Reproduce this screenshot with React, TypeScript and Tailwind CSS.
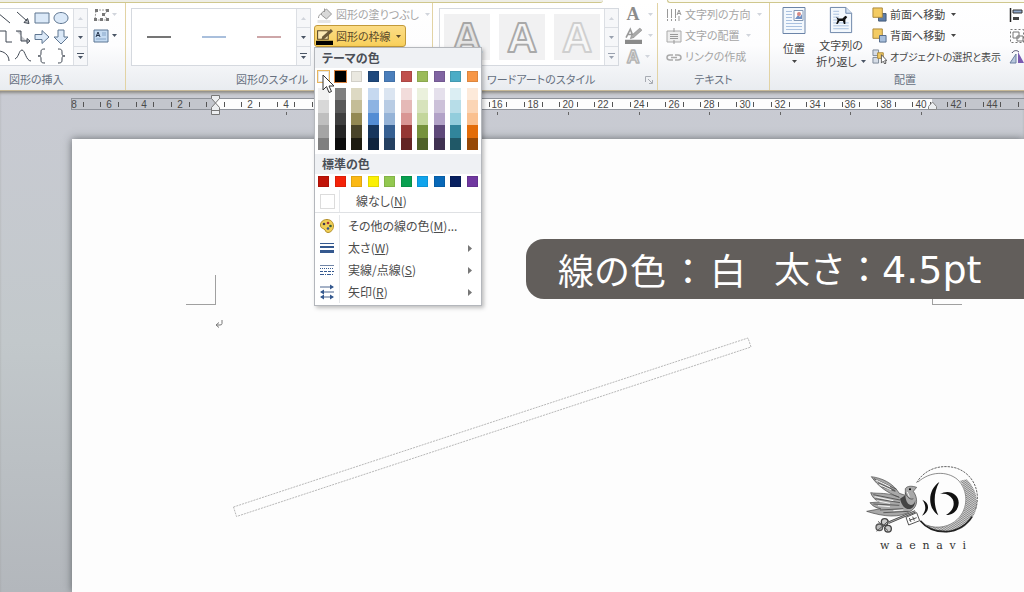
import React from 'react';

const themeColors = [
  { name: '白', base: '#ffffff', shades: ['#f2f2f2', '#d8d8d8', '#bfbfbf', '#a5a5a5', '#7f7f7f'] },
  { name: '黒', base: '#000000', shades: ['#7f7f7f', '#595959', '#3f3f3f', '#262626', '#0c0c0c'] },
  { name: 'ベージュ', base: '#eae8e0', shades: ['#ddd9c3', '#c4bd97', '#938953', '#494429', '#1d1b10'] },
  { name: '濃い青', base: '#1f497d', shades: ['#c6d9f0', '#8db3e2', '#548dd4', '#17365d', '#0f243e'] },
  { name: '青', base: '#4a7ebb', shades: ['#dbe5f1', '#b8cce4', '#95b3d7', '#366092', '#244061'] },
  { name: '赤', base: '#c0504d', shades: ['#f2dcdb', '#e5b9b7', '#d99694', '#953734', '#632423'] },
  { name: 'オリーブ', base: '#9bbb59', shades: ['#ebf1dd', '#d7e3bc', '#c3d69b', '#76923c', '#4f6128'] },
  { name: '紫', base: '#8064a2', shades: ['#e5e0ec', '#ccc1d9', '#b2a2c7', '#5f497a', '#3f3151'] },
  { name: 'アクア', base: '#4bacc6', shades: ['#dbeef3', '#b7dde8', '#92cddc', '#31859b', '#205867'] },
  { name: 'オレンジ', base: '#f79646', shades: ['#fdeada', '#fbd5b5', '#fac08f', '#e36c09', '#974806'] },
];

const standardColors = ['#c01408', '#f42208', '#fbb814', '#fbf004', '#92c850', '#08a050', '#10a4ec', '#0868b8', '#082060', '#7038a0'];

const Caret: React.FC<{ className?: string }> = ({ className = 'text-gray-600' }) => (
  <svg className={`w-[5px] h-[3px] shrink-0 ${className}`} viewBox="0 0 5 3" aria-hidden="true">
    <path d="M0 0h5L2.5 3z" fill="currentColor" />
  </svg>
);

const Icon: React.FC<{ children: React.ReactNode; className?: string }> = ({ children, className = 'w-4 h-4' }) => (
  <svg className={`shrink-0 ${className}`} viewBox="0 0 16 16" fill="none" aria-hidden="true">
    {children}
  </svg>
);

interface GroupProps {
  label: string;
  className: string;
  labelClassName?: string;
  launcher?: boolean;
  children: React.ReactNode;
}

const Group: React.FC<GroupProps> = ({ label, className, labelClassName = 'justify-center', launcher, children }) => (
  <section className={`flex flex-col border-[#e2d3a4] text-[11px] ${className}`}>
    <div className="flex h-[66px] pt-px whitespace-nowrap">{children}</div>
    <div className={`relative flex h-[21px] items-center text-[#66707f] ${labelClassName}`}>
      <h2>{label}</h2>
      {launcher && (
        <svg className="absolute right-1 top-[7px] w-2 h-2" viewBox="0 0 8 8" fill="none" stroke="#a7abb2" aria-hidden="true">
          <path d="M.5 6V.5H6M3 3l4 4M7.500 4v3.500H4" />
        </svg>
      )}
    </div>
  </section>
);

const GalleryScroll: React.FC<{ muted?: boolean }> = ({ muted }) => {
  const tone = muted ? 'text-gray-400' : 'text-gray-600';
  return (
    <div className="flex w-[14px] shrink-0 flex-col divide-y divide-[#dcdfe4] border-l border-[#dcdfe4] bg-[#f6f7f9]">
      <button aria-label="上へ" className="flex flex-1 items-center justify-center">
        <Caret className="rotate-180 text-gray-300" />
      </button>
      <button aria-label="下へ" className="flex flex-1 items-center justify-center">
        <Caret className={tone} />
      </button>
      <button aria-label="その他" className="flex flex-1 flex-col items-center justify-center gap-[2px]">
        <span className={`h-px w-[7px] bg-current ${tone}`} />
        <Caret className={tone} />
      </button>
    </div>
  );
};

const shapes = [
  { name: '直線', path: 'M-1 3L11 13' },
  { name: '矢印', path: 'M2 2l10 9M14 13.500l-1.500-5-3.500 4z', arrow: true },
  { name: '四角形', path: 'M1 3h14v10H1z', fill: true },
  { name: '楕円', path: 'M8 2.500c4 0 7 2.500 7 5.500s-3 5.500-7 5.500S1 11 1 8s3-5.500 7-5.500z', fill: true },
  { name: 'カギ線', path: 'M0 2h7v11h6' },
  { name: 'カギ線矢印', path: 'M1 2h5v10h6M12 9.500l3 2.500-3 2.500z', arrow: true },
  { name: '右矢印', path: 'M1 5.500h7V1.500l7 6.500-7 6.500v-4H1z', fill: true },
  { name: '下矢印', path: 'M5 1v7H1l7 7 7-7h-4V1z', fill: true },
  { name: '円弧', path: 'M-1 3c6 0 11 4 11 10' },
  { name: '曲線', path: 'M0 11C4 9 4 2 7 2s4 11 9 11' },
  { name: '左中かっこ', path: 'M11 1C7 1 7 2 7 5s-1 3-3 3c2 0 3 0 3 3s0 4 4 4' },
  { name: '右中かっこ', path: 'M5 1c4 0 4 1 4 4s1 3 3 3c-2 0-3 0-3 3s0 4-4 4' },
];

const InsertShapes: React.FC = () => (
  <Group label="図形の挿入" className="w-[126px] shrink-0 border-r" labelClassName="pl-[9px]">
    <div className="mt-1 flex h-[58px] w-[88px] shrink-0 border border-l-0 border-[#d5d9df] bg-white">
      <div className="grid flex-1 grid-cols-[13px_19px_19px_19px] items-center justify-items-center">
        {shapes.map(shape => (
          <button key={shape.name} aria-label={shape.name}>
            <Icon>
              <path
                d={shape.path}
                stroke={shape.fill ? '#5f7691' : '#3f4752'}
                fill={shape.fill ? '#dbe9f8' : shape.arrow ? '#3f4752' : 'none'}
                fillOpacity={shape.arrow ? 0.3 : 1}
              />
            </Icon>
          </button>
        ))}
      </div>
      <GalleryScroll />
    </div>
    <div className="flex flex-col pl-[5px]">
      <button aria-label="図形の編集" className="flex h-[21px] items-center gap-[1px]">
        <Icon className="w-[18px] h-[16px]">
          <path d="M2 3h12L10 8l4 5H1z" stroke="#9a9a9a" strokeDasharray="2 1" />
          <path d="M1 2h3v3H1zM12 2h3v3h-3zM8 6h3v3H8zM0 11h3v3H0zM6 11h3v3H6zM12 11h3v3h-3z" fill="#777" />
        </Icon>
        <Caret className="text-gray-300" />
      </button>
      <button aria-label="テキスト ボックス" className="flex h-[21px] items-center gap-[3px]">
        <Icon className="w-[16px] h-[16px]">
          <path d="M1 2h14v12H1z" fill="#c5dbf2" stroke="#5d7694" />
          <path d="M3 9l2-5 2 5M4 7.500h2" stroke="#26354d" />
          <path d="M9 5h4M9 7h4M3 11h10" stroke="#86a5c8" />
        </Icon>
        <Caret />
      </button>
    </div>
  </Group>
);

const Swatch: React.FC<{ color: string; name: string; className?: string }> = ({ color, name, className = '' }) => (
  <button aria-label={name} className={`h-[11px] w-[11px] border border-black/10 ${className}`} style={{ backgroundColor: color }} />
);

const MenuHeading: React.FC<{ children: React.ReactNode }> = ({ children }) => (
  <h3 className="flex h-5 items-center bg-[#eff1f4] pl-[7px] text-[12px] font-bold text-[#4b4f57]">{children}</h3>
);

interface MenuItemProps {
  icon: React.ReactNode;
  label: string;
  accessKey: string;
  suffix?: string;
  submenu?: boolean;
}

const MenuItem: React.FC<MenuItemProps> = ({ icon, label, accessKey, suffix = '', submenu }) => (
  <button className="flex h-[22px] w-full items-center">
    <span className="flex w-6 justify-center">{icon}</span>
    <span className="flex h-full flex-1 items-center border-l border-[#e6e8eb] pl-[8px] text-left">
      <span>
        {label}(<u>{accessKey}</u>){suffix}
      </span>
    </span>
    {submenu && (
      <svg className="mr-[9px] h-[7px] w-1" viewBox="0 0 4 7" aria-hidden="true">
        <path d="M0 0l4 3.500L0 7z" fill="#777" />
      </svg>
    )}
  </button>
);

const OutlineMenu: React.FC = () => (
  <div className="absolute left-0 top-full z-20 w-[168px] border border-[#b4b7bc] bg-white pb-px text-[12px] text-[#4c4c4c] shadow-[2px_2px_4px_rgba(0,0,0,0.25)]">
    <MenuHeading>テーマの色</MenuHeading>
    <div className="flex justify-between px-[3px] pt-[3px]">
      {themeColors.map((color, i) => (
        <Swatch
          key={color.name}
          name={color.name}
          color={color.base}
          className={i === 0 ? 'outline outline-[#e9b65c]' : i === 1 ? 'outline outline-[#d98442]' : ''}
        />
      ))}
    </div>
    <div className="flex justify-between px-[3px] pb-[4px] pt-[6px]">
      {themeColors.map(color => (
        <div key={color.name} className="flex h-[62px] w-[11px] flex-col">
          {color.shades.map(shade => (
            <button key={shade} aria-label={shade} className="flex-1" style={{ backgroundColor: shade }} />
          ))}
        </div>
      ))}
    </div>
    <MenuHeading>標準の色</MenuHeading>
    <div className="flex justify-between px-[3px] pb-[3px] pt-[2px]">
      {standardColors.map(color => (
        <Swatch key={color} name={color} color={color} />
      ))}
    </div>
    <button className="flex h-[23px] w-full items-center border-b border-[#dfe1e4]">
      <span className="flex w-6 justify-center">
        <span className="h-[15px] w-[15px] border border-[#dcdcdc] bg-white" />
      </span>
      <span className="flex h-full items-center border-l border-[#e6e8eb] pl-4">
        <span>線なし(<u>N</u>)</span>
      </span>
    </button>
    <div className="pb-px pt-[2px]">
      <MenuItem
        label="その他の線の色"
        accessKey="M"
        suffix="..."
        icon={
          <Icon>
            <path d="M8 1.500c4 0 6.500 3 6.500 6.500S12 14.500 9 14.500 7 12 5 11 1.500 10 1.500 7 4 1.500 8 1.500z" fill="#f0cf55" stroke="#b38f2b" />
            <circle cx="5" cy="6" r="1.300" fill="#3b3a52" />
            <circle cx="9" cy="5" r="1.300" fill="#a33" />
            <circle cx="11.500" cy="8" r="1.300" fill="#375c39" />
            <circle cx="9" cy="10.500" r="1.300" fill="#37548a" />
          </Icon>
        }
      />
      <MenuItem
        label="太さ"
        accessKey="W"
        submenu
        icon={
          <Icon>
            <path d="M1 3.500h14" stroke="#35598f" />
            <path d="M1 7h14" stroke="#35598f" strokeWidth="2" />
            <path d="M1 11.500h14" stroke="#35598f" strokeWidth="3" />
          </Icon>
        }
      />
      <MenuItem
        label="実線/点線"
        accessKey="S"
        submenu
        icon={
          <Icon>
            <path d="M1 3.500h14" stroke="#7186a8" />
            <path d="M1 6.500h14" stroke="#35598f" strokeDasharray="1 1" />
            <path d="M1 9.500h14" stroke="#35598f" strokeDasharray="3 1" />
            <path d="M1 12.500h14" stroke="#35598f" strokeDasharray="4 1 1 1" />
          </Icon>
        }
      />
      <MenuItem
        label="矢印"
        accessKey="R"
        submenu
        icon={
          <Icon>
            <path d="M1 3h13M2 8h13M2 13h12" stroke="#4a648e" />
            <path d="M11 .5L15 3l-4 2.500zM5 5.500L1 8l4 2.500zM5 10.500L1 13l4 2.500zM11 10.500l4 2.500-4 2.500z" fill="#35598f" />
          </Icon>
        }
      />
    </div>
  </div>
);

const ShapeStyles: React.FC = () => (
  <Group label="図形のスタイル" className="w-[307px] shrink-0 border-r" labelClassName="pl-[110px]">
    <div className="ml-[5px] mt-1 flex h-[58px] w-[180px] shrink-0 border border-[#d5d9df] bg-white">
      <div className="flex flex-1 items-center justify-around">
        <button aria-label="黒" className="h-[2px] w-6 bg-[#757575]" />
        <button aria-label="青" className="h-[2px] w-6 bg-[#a9bfdc]" />
        <button aria-label="赤" className="h-[2px] w-6 bg-[#cda6a8]" />
      </div>
      <GalleryScroll />
    </div>
    <div className="ml-[3px] flex flex-col items-start">
      <button className="flex h-[21px] items-center gap-[3px] pl-[2px] text-[#a5a5a5]">
        <Icon className="w-[17px] h-[16px]">
          <path d="M5 6l5-4 5 5-5 5-5-4z" fill="#d8d8d8" stroke="#999" />
          <path d="M8 5V1.500M5 7c-2 0-3 2-3 4" stroke="#999" />
          <path d="M1 13h13v3H1z" fill="#e5e5e5" />
        </Icon>
        図形の塗りつぶし
        <Caret className="ml-[3px] text-gray-300" />
      </button>
      <div className="relative">
        <button className="flex h-[22px] items-center gap-[3px] rounded-[3px] border border-[#c29a3a] bg-linear-to-b from-[#fbdc86] to-[#f9d05a] pl-px pr-1 text-[#5b4a2a]">
          <Icon className="w-[17px] h-[17px]">
            <path d="M1.500 2.500h10v8h-10z" stroke="#5b4a2a" fill="#fbe9b5" />
            <path d="M14 1l2 2-8 7-3 1 1-3z" fill="#6b5a3a" />
            <path d="M0 12h16v4H0z" fill="#000" />
          </Icon>
          図形の枠線
          <Caret className="ml-[2px] text-[#5b4a2a]" />
        </button>
        <OutlineMenu />
        {/* mouse pointer over the first theme colour */}
        <svg className="absolute left-[8px] top-[49px] z-30 h-[20px] w-[13px]" viewBox="0 0 13 20" aria-hidden="true">
          <path d="M1 1v15l3.500-3.500L7 18.500l2.500-1L7 12h5z" fill="#fff" stroke="#333" />
        </svg>
      </div>
    </div>
  </Group>
);

const wordArt = [
  { name: 'スタイル 1', stroke: '#a6a6a6', fill: '#e4e4e4' },
  { name: 'スタイル 2', stroke: '#a9a9a9', fill: '#f4f4f4' },
  { name: 'スタイル 3', stroke: '#cfcfcf', fill: '#f7f7f7' },
];

// outlined capital drawn on the gallery tiles
const OutlinedA: React.FC<{ stroke: string; fill: string; size: string; width: number }> = ({ stroke, fill, size, width }) => (
  <svg className={`overflow-visible font-['Liberation_Sans'] text-[44px] font-bold ${size}`} viewBox="0 0 40 40" aria-hidden="true">
    <text x="20" y="36" textAnchor="middle" fill={fill} stroke={stroke} strokeWidth={width} strokeLinejoin="round">
      A
    </text>
  </svg>
);

const WordArtStyles: React.FC = () => (
  <Group label="ワードアートのスタイル" className="w-[225px] shrink-0 border-r" labelClassName="pl-[54px]" launcher>
    <div className="ml-[6px] mt-1 flex h-[58px] w-[180px] shrink-0 border border-[#d5d9df] bg-white">
      <div className="flex flex-1 items-center justify-around">
        {wordArt.map(style => (
          <button key={style.name} aria-label={style.name} className="flex h-[46px] w-[46px] items-center justify-center bg-[#f1f1f2]">
            <OutlinedA stroke={style.stroke} fill={style.fill} size="h-[38px] w-[38px]" width={2} />
          </button>
        ))}
      </div>
      <GalleryScroll muted />
    </div>
    <div className="ml-[6px] flex flex-col items-start">
      <button className="flex h-[21px] items-center gap-[7px] font-['Liberation_Serif'] text-[18px] font-bold text-[#8c8c8c]">
        <span className="w-4 text-center">A</span>
        <Caret className="text-gray-300" />
      </button>
      <button aria-label="文字の輪郭" className="flex h-[21px] items-center gap-[6px]">
        <Icon className="w-[17px] h-[17px]">
          <path d="M1 10L5 2l3 8M3 7h4" stroke="#999" strokeWidth="1.500" />
          <path d="M14 1l2 2-8 7-3 1 1-3z" fill="#aaa" stroke="#888" strokeWidth=".5" />
          <path d="M0 12h16v4H0z" fill="#8a8a8a" />
        </Icon>
        <Caret className="text-gray-300" />
      </button>
      <button aria-label="文字の効果" className="flex h-[21px] items-center gap-[4px]">
        <OutlinedA stroke="#b5b5b5" fill="#eee" size="h-4 w-4" width={4} />
        <Caret className="text-gray-300" />
      </button>
    </div>
  </Group>
);

const TextGroup: React.FC = () => (
  <Group label="テキスト" className="w-[112px] shrink-0 border-r">
    <div className="ml-[8px] flex flex-col items-start text-[#a5a5a5]">
      <button className="flex h-[21px] items-center gap-[3px]">
        <Icon>
          <path d="M1.500 2v12M5.500 2v12M9.500 2v12" stroke="#999" strokeDasharray="9 1" />
          <path d="M11 8l2-5 2 5M12 6.500h2M13 9v5" stroke="#999" />
        </Icon>
        文字列の方向
        <Caret className="ml-[3px] text-gray-300" />
      </button>
      <button className="flex h-[21px] items-center gap-[3px]">
        <Icon>
          <path d="M1 3h14v11H1z" stroke="#aaa" fill="#eee" />
          <path d="M4 6.500h8M4 8.500h8M4 10.500h8M8 0v4M8 12v4" stroke="#999" />
        </Icon>
        文字の配置
        <Caret className="ml-[3px] text-gray-300" />
      </button>
      <button className="flex h-[21px] items-center gap-[3px]">
        <Icon>
          <path d="M7 6H4C0 6 0 11 4 11h3M9 6h3c4 0 4 5 0 5H9M5 8.500h6" stroke="#aaa" strokeWidth="1.500" />
        </Icon>
        リンクの作成
      </button>
    </div>
  </Group>
);

const PageIcon: React.FC<{ dog?: boolean }> = ({ dog }) => (
  <svg className="h-[30px] w-6" viewBox="0 0 24 30" fill="none" aria-hidden="true">
    <path d={dog ? 'M1 1.500h16l6 6v20H1z' : 'M1 1.500h22v26H1z'} fill="#f3f8fd" stroke="#6b84a8" />
    <path d="M4 5.500h6M4 8.500h6M4 11.500h6M4 14.500h6M4 17.500h16M4 20.500h16M4 23.500h16" stroke="#a9c1e0" />
    {dog ? (
      <>
        <path d="M17 1.500v6h6" fill="#d4e2f2" stroke="#6b84a8" />
        <path d="M7 11l2.500 2h4l3-3 2 1.500-2 2.500v4.500h-1.500l-1-3H10.500l-2 3H7l1.500-4z" fill="#111" />
      </>
    ) : (
      <>
        <path d="M12 4.500h9v10h-9z" fill="#fff" stroke="#8298b5" />
        <path d="M13 13l3-4 2 2 2-3v5z" fill="#6f8fc2" />
        <circle cx="17" cy="8" r="2" fill="#d88a83" />
      </>
    )}
  </svg>
);

const Arrange: React.FC = () => (
  <Group label="配置" className="min-w-0 flex-1 overflow-hidden" labelClassName="pl-[124px]">
    <div className="flex w-full text-[#454545]">
      <button className="ml-1 flex w-[40px] shrink-0 flex-col items-center pt-[2px] leading-[16px]">
        <PageIcon />
        <span className="mt-1">位置</span>
        <Caret className="mt-[4px]" />
      </button>
      <button className="flex w-[54px] shrink-0 flex-col items-center pt-[2px] leading-[16px]">
        <PageIcon dog />
        <span className="mt-[2px]">文字列の</span>
        <span className="flex items-center gap-1">
          折り返し
          <Caret />
        </span>
      </button>
      <div className="ml-[4px] flex shrink-0 flex-col items-start">
        <button className="flex h-[21px] items-center gap-[3px]">
          <Icon className="w-[15px] h-[15px]">
            <path d="M7 7h8v8H7z" fill="#5f7ea8" stroke="#3f5573" />
            <path d="M1 1h10v10H1z" fill="#f3cb63" stroke="#a8863a" />
          </Icon>
          前面へ移動
          <Caret className="ml-[3px]" />
        </button>
        <button className="flex h-[21px] items-center gap-[3px]">
          <Icon className="w-[15px] h-[15px]">
            <path d="M1 1h10v10H1z" fill="#f3cb63" stroke="#a8863a" />
            <path d="M8 8h7v7H8z" fill="#a8bfdc" stroke="#4f6687" />
          </Icon>
          背面へ移動
          <Caret className="ml-[3px]" />
        </button>
        <button className="flex h-[21px] items-center gap-[3px] text-[10px]">
          <Icon className="w-[15px] h-[15px]">
            <path d="M1 1h6v6H1zM1 9h6v6H1z" fill="#d5dce6" stroke="#7c8796" />
            <path d="M6 4h6v6H6z" fill="#f3cb63" stroke="#a8863a" />
            <path d="M10 6v9l2-2 1.500 3 1.500-1-1.500-2.500H16z" fill="#fff" stroke="#555" />
          </Icon>
          オブジェクトの選択と表示
        </button>
      </div>
      <div className="ml-2 flex shrink-0 flex-col">
        <button aria-label="整列" className="flex h-[21px] items-center">
          <Icon>
            <path d="M1.500 1v14" stroke="#222" strokeWidth="1.500" />
            <path d="M4 3h9v3H4z" fill="#8fa9cd" stroke="#333" />
            <path d="M4 10h6v3H4z" fill="#444" />
          </Icon>
        </button>
        <button aria-label="グループ化" className="flex h-[21px] items-center">
          <Icon>
            <path d="M1.500 1.500h13v13h-13z" stroke="#777" strokeDasharray="2 2" />
            <path d="M4 4h6v6H4zM8 8h6v5H8z" stroke="#777" />
          </Icon>
        </button>
        <button aria-label="回転" className="flex h-[21px] items-center">
          <Icon>
            <path d="M1 14h6V5z" fill="#b8c7dd" stroke="#6a7fa0" />
            <path d="M9 14V3l6 11z" fill="#7b5bb0" />
            <path d="M3 4c2-3 5-3 7-1" stroke="#446" />
          </Icon>
        </button>
      </div>
    </div>
  </Group>
);

const Ribbon: React.FC = () => (
  <header className="border-b border-[#c6b897] bg-linear-to-b from-white via-[#fdfdfe] to-[#e9ecf0]">
    <div className="flex h-[3px] justify-between gap-16 bg-white">
      <div className="w-[603px] rounded-br border-b border-[#cfc78d] bg-[#eeeee6]" />
      <div className="flex-1 rounded-bl border-b border-l border-[#cfc78d] bg-[#fbfaf2]" />
    </div>
    <div className="flex">
      <InsertShapes />
      <ShapeStyles />
      <WordArtStyles />
      <TextGroup />
      <Arrange />
    </div>
  </header>
);

// ruler is measured in characters, zero sits on the left margin
const RULER_ZERO = 144;
const RULER_UNIT = 17.65;
const rulerNumbers = Array.from({ length: 27 }, (_, i) => (i - 4) * 2);
const rulerTicks = Array.from({ length: 56 }, (_, i) => i - 8 + 0.5);
const rulerTabs = Array.from({ length: 10 }, (_, i) => (i + 1) * 4);

const Ruler: React.FC = () => (
  <div className="ml-[71px] pt-1">
    <svg className="h-5 w-full font-['Liberation_Sans'] text-[10px]" aria-hidden="true">
      <rect x="0" y="3" width="100%" height="11" fill="#c3c6cd" />
      <rect x={RULER_ZERO} y="3" width="717" height="11" fill="#fdfdfd" />
      <path d="M.5 3v11M0 3.500h2000M0 14.500h2000" stroke="#8f939b" />
      {rulerTicks.map(n => (
        <rect key={n} x={Math.round(RULER_ZERO + n * RULER_UNIT)} y="7" width="1" height="5" fill="#555" />
      ))}
      {rulerNumbers.filter(n => n !== 0).map(n => (
        <text key={n} x={Math.round(RULER_ZERO + n * RULER_UNIT)} y="13" textAnchor="middle" fill="#4a4a4a">
          {Math.abs(n)}
        </text>
      ))}
      {rulerTabs.map(n => (
        <rect key={n} x={Math.round(RULER_ZERO + n * RULER_UNIT)} y="17" width="1" height="3" fill="#666" />
      ))}
      <path d="M140.500.5h8v3l-4 4.500-4-4.500zM140.500 12.500l4-4.500 4 4.500v7h-8zM140.500 15.500h8" fill="#eceef0" stroke="#777" />
      <path d="M857.500 14.500v-3l4-4.500 4 4.500v3z" fill="#eceef0" stroke="#888" />
    </svg>
  </div>
);

const Logo: React.FC = () => (
  <div className="absolute left-[778px] top-[311px] h-[120px] w-[150px]">
    <svg className="h-full w-full" viewBox="0 0 450 360" fill="none" aria-hidden="true">
      <defs>
        <pattern id="hatch" width="5" height="5" patternUnits="userSpaceOnUse" patternTransform="rotate(35)">
          <rect width="5" height="5" fill="#c4c4c4" />
          <rect width="5" height="2" fill="#444" />
        </pattern>
      </defs>
      <path d="M350 88C392 130 392 190 345 228C320 246 300 248 280 246C245 245 222 228 211 212C245 240 290 238 322 210C356 178 356 128 330 92z" fill="url(#hatch)" fillOpacity=".75" />
      <path d="M200 98C225 55 275 42 318 54C372 72 394 128 376 180" stroke="#666" strokeWidth="3" strokeDasharray="7 3" />
      <path d="M211 212C232 238 260 246 290 245C320 244 350 226 366 200" stroke="#222" strokeWidth="5" />
      <path d="M204 96C240 64 290 62 322 88C356 120 356 176 322 208C300 230 262 238 232 226" stroke="#555" strokeWidth="2" />
      <path d="M268 96C234 118 230 172 265 196C250 165 250 128 268 96z" fill="#111" />
      <path d="M270 132C296 116 328 132 326 160C324 184 306 196 288 195C308 184 316 164 308 148C300 134 286 129 270 132z" fill="#111" />
      <path d="M217 149C240 158 240 186 216 197C229 181 229 166 217 149z" fill="#111" />
      <path d="M64 80C95 84 128 98 148 130L166 136L166 116C172 106 188 108 200 112L190 124C204 144 204 168 184 182C150 206 100 200 50 184L92 176C76 174 66 166 60 158L88 156C74 150 66 140 62 128C86 132 112 126 148 142C110 128 84 108 64 80z" fill="#a8a8a8" stroke="#444" strokeWidth="2" />
      <path d="M150 146C160 190 196 184 196 150C192 172 168 172 166 136z" fill="#444" />
      <path d="M72 86L140 118M84 98L136 122M96 110L136 124M70 134L150 150M76 146L150 158M70 162L148 166M90 180L160 176M100 188L176 184M166 128C172 144 182 150 190 146" stroke="#333" strokeWidth="2" />
      <path d="M78 90L120 110M88 104L124 120M74 140L130 152M80 152L120 160M84 167L120 170M130 182L160 180M172 126L178 140" stroke="#f4f4f4" strokeWidth="3" />
      <circle cx="180" cy="118" r="3" fill="#000" />
      <path d="M196 184L116 218" stroke="#444" strokeWidth="7" />
      <path d="M196 184L116 218" stroke="#ddd" strokeWidth="2" />
      <path d="M168 202L200 188L209 212L176 225zM178 204l5 12M188 200l5 12M178 211l22-8" stroke="#555" strokeWidth="3" />
      <circle cx="104" cy="216" r="10" fill="#ccc" stroke="#444" strokeWidth="4" />
      <circle cx="88" cy="232" r="10" fill="#bbb" stroke="#555" strokeWidth="4" />
      <circle cx="114" cy="236" r="10" fill="#ccc" stroke="#444" strokeWidth="4" />
      <path d="M84 214l30 28M80 244l36-32" stroke="#555" strokeWidth="3" />
    </svg>
    <p className="absolute bottom-[16px] left-[30px] flex w-[86px] justify-between font-['DejaVu_Serif'] text-[11px] text-[#333]">
      {'waenavi'.split('').map((letter, i) => (
        <span key={i}>{letter}</span>
      ))}
    </p>
  </div>
);

const Page: React.FC = () => (
  <main className="relative ml-[72px] mt-[24px] flex-1 bg-[#fdfdfd] shadow-[0_0_8px_rgba(60,65,68,0.7)]">
    {/* crop marks */}
    <div className="absolute left-[114px] top-[136px] h-[30px] w-[30px] border-b border-r border-[#a0a0a0]" />
    <div className="absolute left-[860px] top-[136px] h-[30px] w-[30px] border-b border-l border-[#a0a0a0]" />
    <svg className="absolute left-[143px] top-[181px] h-2 w-2" viewBox="0 0 8 8" fill="none" stroke="#777" aria-hidden="true">
      <path d="M7 0v3.500Q7 5 5 5H1.500M4 2.500L1 5l3 2.500" />
    </svg>
    <svg className="absolute left-[158px] top-[191px] h-[200px] w-[530px]" viewBox="0 0 530 200" fill="none" aria-hidden="true">
      <path d="M3.500 177L518 8l3 9L6.500 186.500z" stroke="#b8b8b8" strokeDasharray="2 1" />
    </svg>
    <div className="absolute right-0 top-[100px] flex h-[60px] w-[498px] items-center gap-1 rounded-l-[18px] bg-[#625e5b] pl-8 text-[36px] whitespace-nowrap text-white [font-feature-settings:normal]">
      <span>線の色</span>
      <span>：</span>
      <span>白</span>
      <span className="ml-6">
        太さ：<span className="font-['DejaVu_Sans'] text-[38px]">4.5pt</span>
      </span>
    </div>
    <Logo />
  </main>
);

export default function App() {
  return (
    <div className="flex min-h-screen flex-col overflow-hidden bg-[#b4b9bd] font-['Noto_Sans_CJK_JP',sans-serif] [font-feature-settings:'palt']">
      <Ribbon />
      <div className="flex flex-1 flex-col bg-linear-to-b from-[#c9cbd3] via-[#c2c8cb] to-[#b3b7bc] shadow-[inset_0_3px_3px_-1px_#8d8b85]">
        <Ruler />
        <Page />
      </div>
    </div>
  );
}
